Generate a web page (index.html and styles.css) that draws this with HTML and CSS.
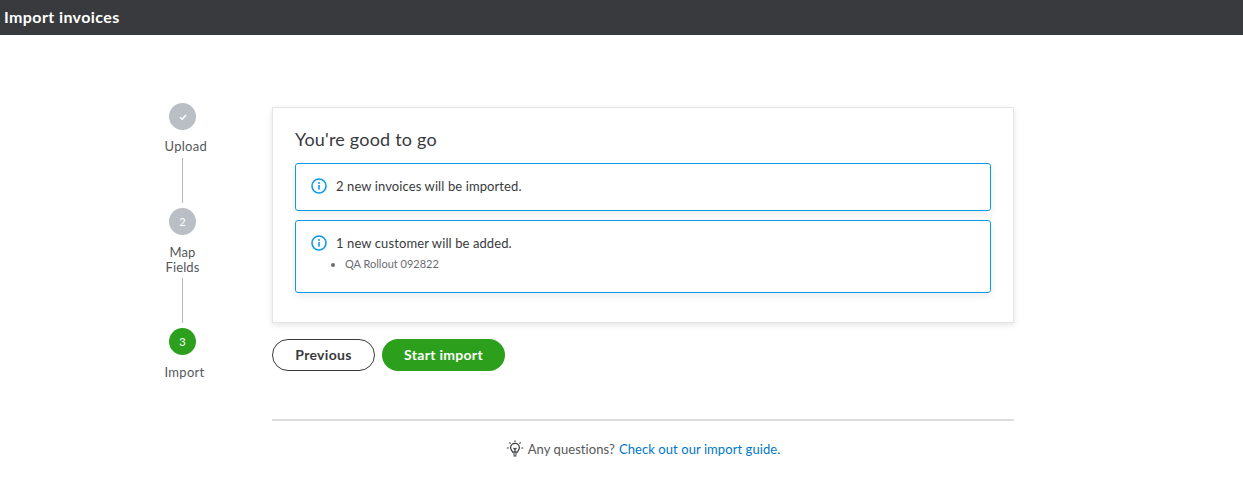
FILE: index.html
```html
<!DOCTYPE html>
<html lang="en">
<head>
<meta charset="utf-8">
<title>Import invoices</title>
<link rel="stylesheet" href="styles.css">
</head>
<body>
<header class="topbar"><h1 class="topbar-title">Import invoices</h1></header>
<div class="page">
  <nav class="stepper">
    <div class="step">
      <div class="dot">
        <svg class="check" viewBox="0 0 10 10" width="10" height="10"><path d="M2 5.2 4.2 7.2 8 3" fill="none" stroke="#fff" stroke-width="1.5"/></svg>
      </div>
      <div class="step-label step-label-single step-label-first">Upload</div>
    </div>
    <div class="connector connector-first"></div>
    <div class="step">
      <div class="dot">2</div>
      <div class="step-label">Map<br>Fields</div>
    </div>
    <div class="connector"></div>
    <div class="step">
      <div class="dot dot-active">3</div>
      <div class="step-label step-label-single">Import</div>
    </div>
  </nav>
  <main class="content">
    <section class="card">
      <h2 class="card-title">You're good to go</h2>
      <div class="notice">
        <div class="notice-head">
          <svg class="info" viewBox="0 0 16 16" width="16" height="16"><circle cx="8" cy="8" r="7" fill="none" stroke="#0e9be6" stroke-width="1.6"/><rect x="7.2" y="7" width="1.6" height="4.6" fill="#0e9be6"/><circle cx="8" cy="5" r="1" fill="#0e9be6"/></svg>
          <span>2 new invoices will be imported.</span>
        </div>
      </div>
      <div class="notice notice-list">
        <div class="notice-head">
          <svg class="info" viewBox="0 0 16 16" width="16" height="16"><circle cx="8" cy="8" r="7" fill="none" stroke="#0e9be6" stroke-width="1.6"/><rect x="7.2" y="7" width="1.6" height="4.6" fill="#0e9be6"/><circle cx="8" cy="5" r="1" fill="#0e9be6"/></svg>
          <span>1 new customer will be added.</span>
        </div>
        <ul class="names"><li>QA Rollout 092822</li></ul>
      </div>
    </section>
    <div class="actions">
      <button class="btn btn-secondary" type="button">Previous</button>
      <button class="btn btn-primary" type="button">Start import</button>
    </div>
    <footer class="help">
      <svg class="bulb" viewBox="0 0 18 18" width="18" height="18" fill="none" stroke="#393a3d" stroke-width="1.2"><path d="M6.6 12.2c-.1-1.4-2-2.2-2-4.4a4.4 4.400 0 0 1 8.800 0c0 2.200-1.900 3-2 4.400z"/><path d="M7 14h4M7.600 15.800h2.800"/><path d="M7.500 8l1.500 1.500L10.500 8M9 9.500v2.700"/><path d="M0.800 8h1.900M15.300 8h1.900M9 .6v1.300M3.400 2.500l1.200 1.200M14.600 2.500l-1.200 1.200"/></svg>
      <span>Any questions?</span>
      <a class="help-link" href="#">Check out our import guide.</a>
    </footer>
  </main>
</div>
</body>
</html>
```
FILE: styles.css
```css
* { box-sizing: border-box; }
html, body { margin: 0; padding: 0; }
body {
  background: #fff;
  color: #393a3d;
  font-family: "Lato", "Liberation Sans", sans-serif;
  font-size: 13px;
}
.topbar {
  height: 35px;
  background: #393a3d;
  display: flex;
  align-items: center;
  padding-left: 4px;
}
.topbar-title {
  margin: 0 0 2px;
  color: #fff;
  font-size: 16px;
  font-weight: 700;
  letter-spacing: 0.4px;
}
.page {
  display: flex;
  padding: 68px 0 0 152px;
}
.stepper {
  width: 61px;
  margin-right: 59px;
  display: flex;
  flex-direction: column;
  align-items: center;
}
.step {
  display: flex;
  flex-direction: column;
  align-items: center;
}
.dot {
  width: 27px;
  height: 27px;
  border-radius: 50%;
  background: #babec5;
  color: #fff;
  font-size: 11px;
  font-weight: 400;
  display: flex;
  align-items: center;
  justify-content: center;
}
.dot-active { background: #2ca01c; }
.step-label {
  margin-top: 10px;
  font-size: 13px;
  line-height: 15px;
  text-align: center;
  color: #55575c;
  letter-spacing: 0.1px;
}
.step-label-single {
  width: 36px;
  text-align: left;
  white-space: nowrap;
  letter-spacing: 0.3px;
}
.step-label-first { margin-top: 9px; }
.connector {
  width: 1px;
  height: 45px;
  margin: 3px 0 5px;
  background: #b4b6ba;
}
.connector-first { margin-top: 4px; }
.content {
  width: 742px;
  padding-top: 4px;
}
.card {
  height: 216px;
  padding: 20px 22px 0;
  background: #fff;
  border: 1px solid #e3e4e6;
  box-shadow: 0 2px 6px rgba(0, 0, 0, 0.11);
}
.card-title {
  margin: 0 0 13px;
  font-size: 18px;
  line-height: 22px;
  font-weight: 400;
  color: #393a3d;
  letter-spacing: 0.2px;
}
.notice {
  height: 48px;
  margin-bottom: 9px;
  padding: 14px 15px;
  border: 1px solid #0e9be6;
  border-radius: 3px;
  box-shadow: 0 3px 8px rgba(0, 0, 0, 0.08);
}
.notice-list { height: 73px; }
.notice-head {
  display: flex;
  align-items: center;
  gap: 9px;
  height: 16px;
  font-size: 13px;
  color: #393a3d;
  letter-spacing: 0.1px;
}
.names {
  margin: 5px 0 0;
  padding: 0 0 0 34px;
  font-size: 11px;
  line-height: 15px;
  color: #6b6c72;
}
.actions {
  display: flex;
  gap: 7px;
  margin-top: 16px;
}
.btn {
  height: 32px;
  border-radius: 16px;
  font-family: inherit;
  font-size: 14px;
  font-weight: 700;
  letter-spacing: 0.3px;
  padding: 0 0 2px;
}
.btn-secondary {
  width: 103px;
  background: #fff;
  border: 1px solid #393a3d;
  color: #393a3d;
}
.btn-primary {
  width: 123px;
  background: #2ca01c;
  border: 0;
  color: #fff;
}
.help {
  margin-top: 48px;
  height: 40px;
  border-top: 2px solid #dcdddf;
  display: flex;
  align-items: center;
  justify-content: center;
  gap: 4px;
  padding-top: 18px;
  font-size: 13px;
  letter-spacing: 0.07px;
  color: #55575c;
}
.bulb { flex: none; }
.help-link { color: #0077c5; text-decoration: none; }
```
